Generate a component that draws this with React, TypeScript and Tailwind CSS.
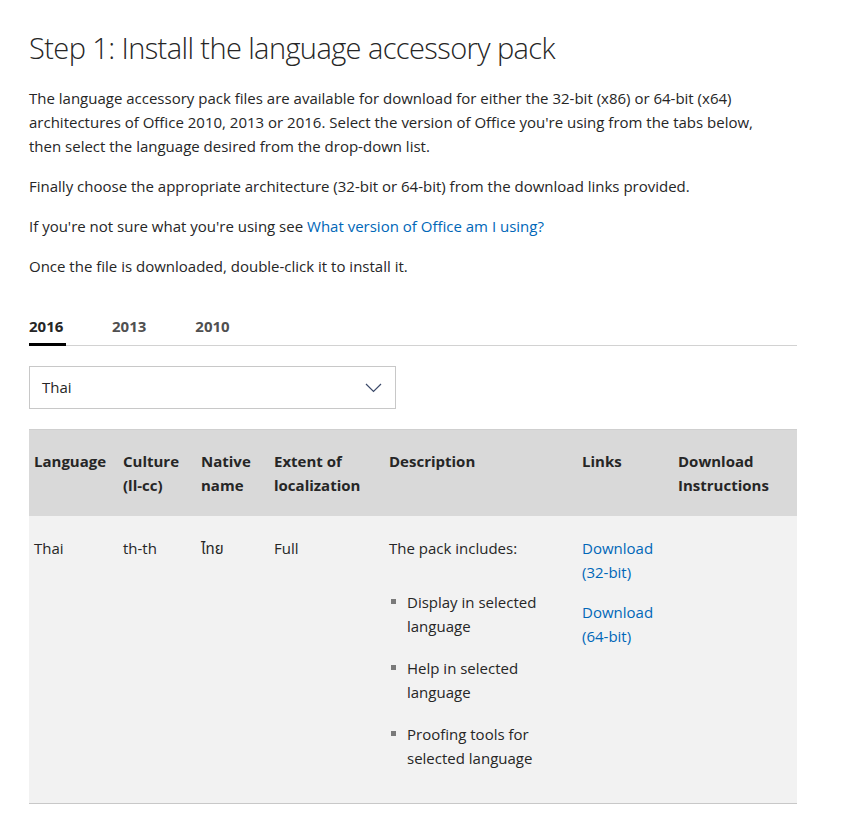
import React from "react";

const font = { fontFamily: '"Open Sans", "Noto Sans", "Noto Sans Thai", sans-serif' };

export default function App() {
  const headers = [
    "Language",
    "Culture (ll-cc)",
    "Native name",
    "Extent of localization",
    "Description",
    "Links",
    "Download Instructions",
  ];
  return (
    <div className="bg-white min-h-[833px] text-[#262626]" style={font}>
      <div className="ml-[29px] w-[768px] pt-[27px]">
        <h1 className="text-[29px] font-light leading-[42px] tracking-[-0.6px] text-[#262626] mb-[17px]">
          Step 1: Install the language accessory pack
        </h1>
        <div className="text-[15px] leading-[24px] flex flex-col gap-[16px] w-[752px]">
          <p>
            The language accessory pack files are available for download for either the 32-bit (x86) or 64-bit (x64)
            architectures of Office 2010, 2013 or 2016. Select the version of Office you're using from the tabs below,
            then select the language desired from the drop-down list.
          </p>
          <p>Finally choose the appropriate architecture (32-bit or 64-bit) from the download links provided.</p>
          <p>
            If you're not sure what you're using see{" "}
            <a className="text-[#0067b8]">What version of Office am I using?</a>
          </p>
          <p>Once the file is downloaded, double-click it to install it.</p>
        </div>

        <div className="mt-[36px] flex border-b border-[#d2d2d2] text-[15px] font-bold">
          <div className="w-[37px] pb-[5px] border-b-[3px] border-black -mb-px text-[#262626] leading-[24px]">2016</div>
          <div className="ml-[46px] pb-[6px] text-[#505050] leading-[24px]">2013</div>
          <div className="ml-[49px] pb-[6px] text-[#505050] leading-[24px]">2010</div>
        </div>

        <div className="mt-[20px] w-[367px] h-[43px] border border-[#c8c8c8] flex items-center justify-between pl-[12px] pr-[13px] text-[15px]">
          <span>Thai</span>
          <svg width="17" height="10" viewBox="0 0 17 10" fill="none">
            <path d="M1 1 L8.5 8.5 L16 1" stroke="#3c4a6a" strokeWidth="1.2" />
          </svg>
        </div>

        <div className="mt-[20px] border-b border-[#c8c8c8] text-[15px] leading-[24px]">
          <div className="grid grid-cols-[89px_78px_73px_115px_193px_96px_124px] bg-[#d9d9d9] border-t border-[#cfcfcf] font-bold">
            {headers.map((h) => (
              <div key={h} className="pl-[5px] pr-[8px] pt-[19px] pb-[19px]">
                {h}
              </div>
            ))}
          </div>
          <div className="grid grid-cols-[89px_78px_73px_115px_193px_96px_124px] bg-[#f2f2f2] pb-[33px]">
            <div className="pl-[5px] pt-[20px]">Thai</div>
            <div className="pl-[5px] pt-[20px]">th-th</div>
            <div className="pl-[5px] pt-[20px]">ไทย</div>
            <div className="pl-[5px] pt-[20px]">Full</div>
            <div className="pl-[5px] pr-[20px] pt-[20px]">
              <p>The pack includes:</p>
              <ul className="mt-[30px] flex flex-col gap-[18px]">
                {["Display in selected language", "Help in selected language", "Proofing tools for selected language"].map(
                  (t) => (
                    <li key={t} className="flex">
                      <span className="w-[18px] shrink-0 pt-[9px] pl-[2px]">
                        <span className="block w-[5px] h-[5px] bg-[#7a7a7a]" />
                      </span>
                      <span className="w-[140px]">{t}</span>
                    </li>
                  )
                )}
              </ul>
            </div>
            <div className="pl-[5px] pt-[20px] text-[#0067b8] flex flex-col gap-[16px]">
              <a className="w-[80px]">Download (32-bit)</a>
              <a className="w-[80px]">Download (64-bit)</a>
            </div>
            <div />
          </div>
        </div>
      </div>
    </div>
  );
}
